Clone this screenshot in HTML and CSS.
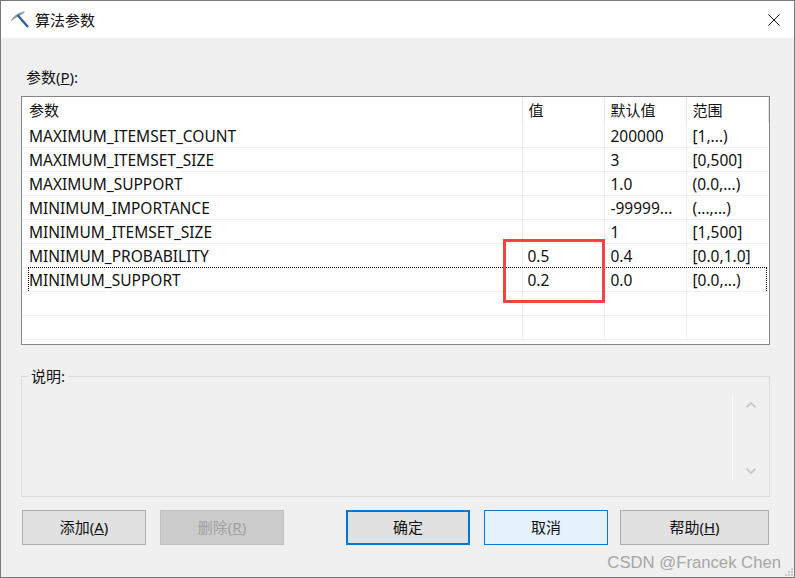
FILE: index.html
```html
<!DOCTYPE html>
<html lang="zh-CN">
<head>
  <meta charset="UTF-8" />
  <title>算法参数</title>
  <link rel="stylesheet" href="styles.css">
</head>
<body>

<div class="dialog">
  <header class="titlebar">
    <svg class="app-icon" width="18" height="17" viewBox="0 0 18 17">
      <path d="M0 9.5 C2.5 5 7 1.5 13 0.5 L14 1 C12 3 10 3.5 7.5 5.5 C5 6.5 3 7.5 0.5 10 Z" fill="#8f99a8" />
      <path d="M6.5 4 L17 16" stroke="#2f5f94" stroke-width="2.2" fill="none" />
    </svg>
    <span class="title">算法参数</span>
    <svg class="close" width="12" height="12" viewBox="0 0 12 12">
      <path d="M0.5 0.5 L11.5 11.5 M11.5 0.5 L0.5 11.5" stroke="#111" stroke-width="1" fill="none" />
    </svg>
  </header>

  <main class="content">
    <label class="list-label">参数(<u>P</u>):</label>

    <div class="list">
      <table class="params">
        <colgroup>
          <col class="col-name" /><col class="col-value" /><col class="col-default" /><col class="col-range" /><col class="col-rest" />
        </colgroup>
        <thead>
          <tr><th>参数</th><th>值</th><th>默认值</th><th>范围</th><th></th></tr>
        </thead>
        <tbody>
          <tr><td>MAXIMUM_ITEMSET_COUNT</td><td></td><td>200000</td><td>[1,...)</td><td></td></tr>
          <tr><td>MAXIMUM_ITEMSET_SIZE</td><td></td><td>3</td><td>[0,500]</td><td></td></tr>
          <tr><td>MAXIMUM_SUPPORT</td><td></td><td>1.0</td><td>(0.0,...)</td><td></td></tr>
          <tr><td>MINIMUM_IMPORTANCE</td><td></td><td>-99999...</td><td>(...,...)</td><td></td></tr>
          <tr><td>MINIMUM_ITEMSET_SIZE</td><td></td><td>1</td><td>[1,500]</td><td></td></tr>
          <tr><td>MINIMUM_PROBABILITY</td><td>0.5</td><td>0.4</td><td>[0.0,1.0]</td><td></td></tr>
          <tr><td>MINIMUM_SUPPORT</td><td>0.2</td><td>0.0</td><td>[0.0,...)</td><td></td></tr>
          <tr><td></td><td></td><td></td><td></td><td></td></tr>
          <tr><td></td><td></td><td></td><td></td><td></td></tr>
        </tbody>
      </table>
      <div class="focus-rect"></div>
      <div class="highlight"></div>
    </div>

    <fieldset class="description">
      <legend>说明:</legend>
      <div class="scroller">
        <svg width="10" height="6" viewBox="0 0 10 6"><path d="M0.5 5.5 L5 1 L9.5 5.5" stroke="#c4c4c4" stroke-width="1.6" fill="none" /></svg>
        <svg width="10" height="6" viewBox="0 0 10 6"><path d="M0.5 0.5 L5 5 L9.5 0.5" stroke="#c4c4c4" stroke-width="1.6" fill="none" /></svg>
      </div>
    </fieldset>

    <div class="buttons">
      <button class="btn">添加(<u>A</u>)</button>
      <button class="btn disabled">删除(<u>R</u>)</button>
      <button class="btn default">确定</button>
      <button class="btn hover">取消</button>
      <button class="btn wide">帮助(<u>H</u>)</button>
    </div>
  </main>

  <div class="watermark">CSDN @Francek Chen</div>
  <svg class="grip" width="10" height="10" viewBox="0 0 10 10">
    <path d="M7 1h2v2h-2z M4 4h2v2h-2z M7 4h2v2h-2z M1 7h2v2h-2z M4 7h2v2h-2z M7 7h2v2h-2z" fill="#c8c8c8" />
  </svg>
</div>

</body>
</html>
```

FILE: styles.css
```css
* {
  box-sizing: border-box;
}
html, body {
  margin: 0;
  padding: 0;
}
body {
  font-family: "Noto Sans", "Noto Sans CJK SC", sans-serif;
  font-size: 15px;
  color: #111;
  background: #f0f0f0;
}
.dialog {
  position: relative;
  width: 795px;
  height: 578px;
  border: 1px solid #7a7a7a;
  background: #f0f0f0;
  overflow: hidden;
}
.titlebar {
  display: flex;
  align-items: center;
  height: 37px;
  background: #fff;
  padding: 0 14px 0 10px;
}
.app-icon {
  margin-right: 6px;
}
.title {
  flex: 1;
}
.content {
  padding: 30px 24px 0 20px;
}
.list-label {
  display: block;
  height: 28px;
  line-height: 18px;
  padding-left: 5px;
}
.list {
  position: relative;
  width: 749px;
  height: 249px;
  background: #fff;
  border: 1px solid #82868c;
  overflow: hidden;
}
.params {
  table-layout: fixed;
  width: 747px;
  border-collapse: collapse;
}
.col-name { width: 500px; }
.col-value { width: 82px; }
.col-default { width: 82px; }
.col-range { width: 82px; }
.col-rest { width: 1px; }
.params th {
  height: 26px;
  padding: 0 0 2px 6px;
  font-weight: normal;
  text-align: left;
  border-right: 1px solid #e5e5e5;
}
.params th:first-child {
  padding-left: 7px;
}
.params td {
  height: 24px;
  padding: 1px 0 0 6px;
  font-size: 15.5px;
  white-space: nowrap;
  overflow: hidden;
  border-right: 1px solid #f0f0f0;
  border-bottom: 1px solid #f0f0f0;
}
.params tbody tr:first-child td {
  padding-top: 2px;
}
.params td:first-child {
  padding-left: 7px;
}
.params td:nth-child(2) {
  padding-left: 5px;
}
.params td:nth-child(4) {
  border-right: none;
}
.params th:last-child,
.params td:last-child {
  padding: 0;
  border-right: none;
}
.focus-rect {
  position: absolute;
  left: 6px;
  top: 170px;
  width: 739px;
  height: 24px;
  border: 1px dotted #000;
  border-bottom: none;
}
.highlight {
  position: absolute;
  left: 481px;
  top: 142px;
  width: 102px;
  height: 64px;
  border: 3px solid #f44343;
}
.description {
  position: relative;
  width: 749px;
  height: 128px;
  margin: 24px 0 0 0;
  padding: 0;
  border: 1px solid #dcdcdc;
}
.description legend {
  padding: 0 3px;
  margin-left: 6px;
  line-height: 14px;
}
.scroller {
  position: absolute;
  right: 0;
  top: 12px;
  width: 37px;
  height: 86px;
  border-left: 1px solid #fff;
  display: flex;
  flex-direction: column;
  justify-content: space-between;
  align-items: center;
  padding: 7px 0;
}
.buttons {
  display: flex;
  margin-top: 13px;
  margin-left: 1px;
}
.btn {
  width: 124px;
  height: 35px;
  margin-right: 14px;
  padding: 0 0 3px;
  border: 1px solid #adadad;
  background: #e1e1e1;
  color: #111;
  font: inherit;
}
.disabled {
  background: #cccccc;
  border-color: #bfbfbf;
  color: #a0a0a0;
  margin-right: 62px;
}
.default {
  border: 2px solid #0078d7;
}
.hover {
  background: #e5f1fb;
  border-color: #0078d7;
  margin-right: 12px;
}
.wide {
  width: 149px;
  margin-right: 0;
}
.watermark {
  position: absolute;
  right: 13px;
  bottom: 4px;
  font-family: "Liberation Sans", sans-serif;
  font-size: 16.7px;
  color: #a6a6a6;
}
.grip {
  position: absolute;
  right: 0;
  bottom: 0;
}
```
